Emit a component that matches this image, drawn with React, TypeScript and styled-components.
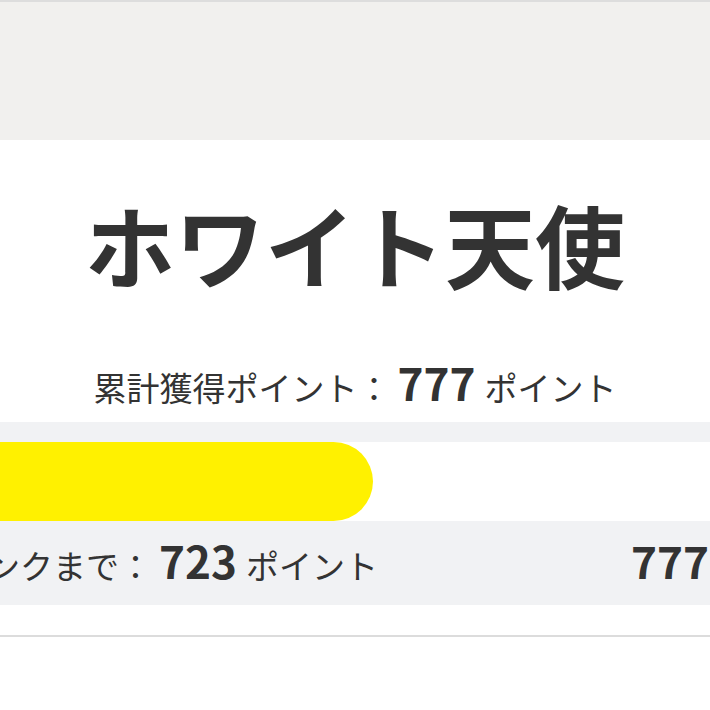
import React from "react";
import styled, { createGlobalStyle } from "styled-components";

const Global = createGlobalStyle`
  html, body { margin: 0; padding: 0; background: #ffffff; }
  body { overflow: hidden; width: 710px; }
  * { box-sizing: border-box; }
`;

const Page = styled.div`
  width: 710px;
  min-height: 710px;
  overflow: hidden;
  font-family: "Noto Sans CJK JP", "Noto Sans", sans-serif;
  color: #333333;
  background: #ffffff;
  border-top: 2px solid #dddddd;
`;

const Header = styled.header`
  height: 138px;
  background: #f1f0ee;
`;

const Card = styled.section`
  display: flex;
  flex-direction: column;
  align-items: center;
  padding-top: 49px;
  border-bottom: 2px solid #dcdcdc;
`;

const RankTitle = styled.h1`
  margin: 0;
  font-size: 90px;
  line-height: 108px;
  font-weight: 700;
  letter-spacing: 0;
  white-space: nowrap;
`;

const Total = styled.p`
  margin: 60px 0 0;
  font-size: 33px;
  line-height: 60px;
  font-weight: 400;
  white-space: nowrap;
`;

const Num = styled.span`
  font-size: 44px;
  font-weight: 700;
  line-height: 1;
  margin: 0 9px 0 7px;
`;

const ProgressBox = styled.div`
  align-self: stretch;
  margin: 5px -34px 30px -150px;
  padding: 20px 0 0 38px;
  background: #f1f2f4;
`;

const Track = styled.div`
  height: 79px;
  background: #ffffff;
  border-radius: 40px 0 0 40px;
  overflow: hidden;
`;

const Fill = styled.div`
  height: 100%;
  background: #fff100;
  border-radius: 40px;
`;

const InfoRow = styled.div`
  display: flex;
  justify-content: space-between;
  align-items: baseline;
  height: 84px;
  padding-top: 14px;
  font-size: 33px;
  line-height: 60px;
  white-space: nowrap;
`;

const Left = styled.div``;
const Right = styled.div`
  padding-right: 26px;
`;

export default function App() {
  const percent = 56.7;
  return (
    <>
      <Global />
      <Page>
        <Header />
        <Card>
          <RankTitle>ホワイト天使</RankTitle>
          <Total>
            累計獲得ポイント：<Num>777</Num>ポイント
          </Total>
          <ProgressBox>
            <Track>
              <Fill style={{ width: `${percent}%` }} />
            </Track>
            <InfoRow>
              <Left>
                次のランクまで：<Num>723</Num>ポイント
              </Left>
              <Right>
                <Num>777</Num>
              </Right>
            </InfoRow>
          </ProgressBox>
        </Card>
      </Page>
    </>
  );
}
